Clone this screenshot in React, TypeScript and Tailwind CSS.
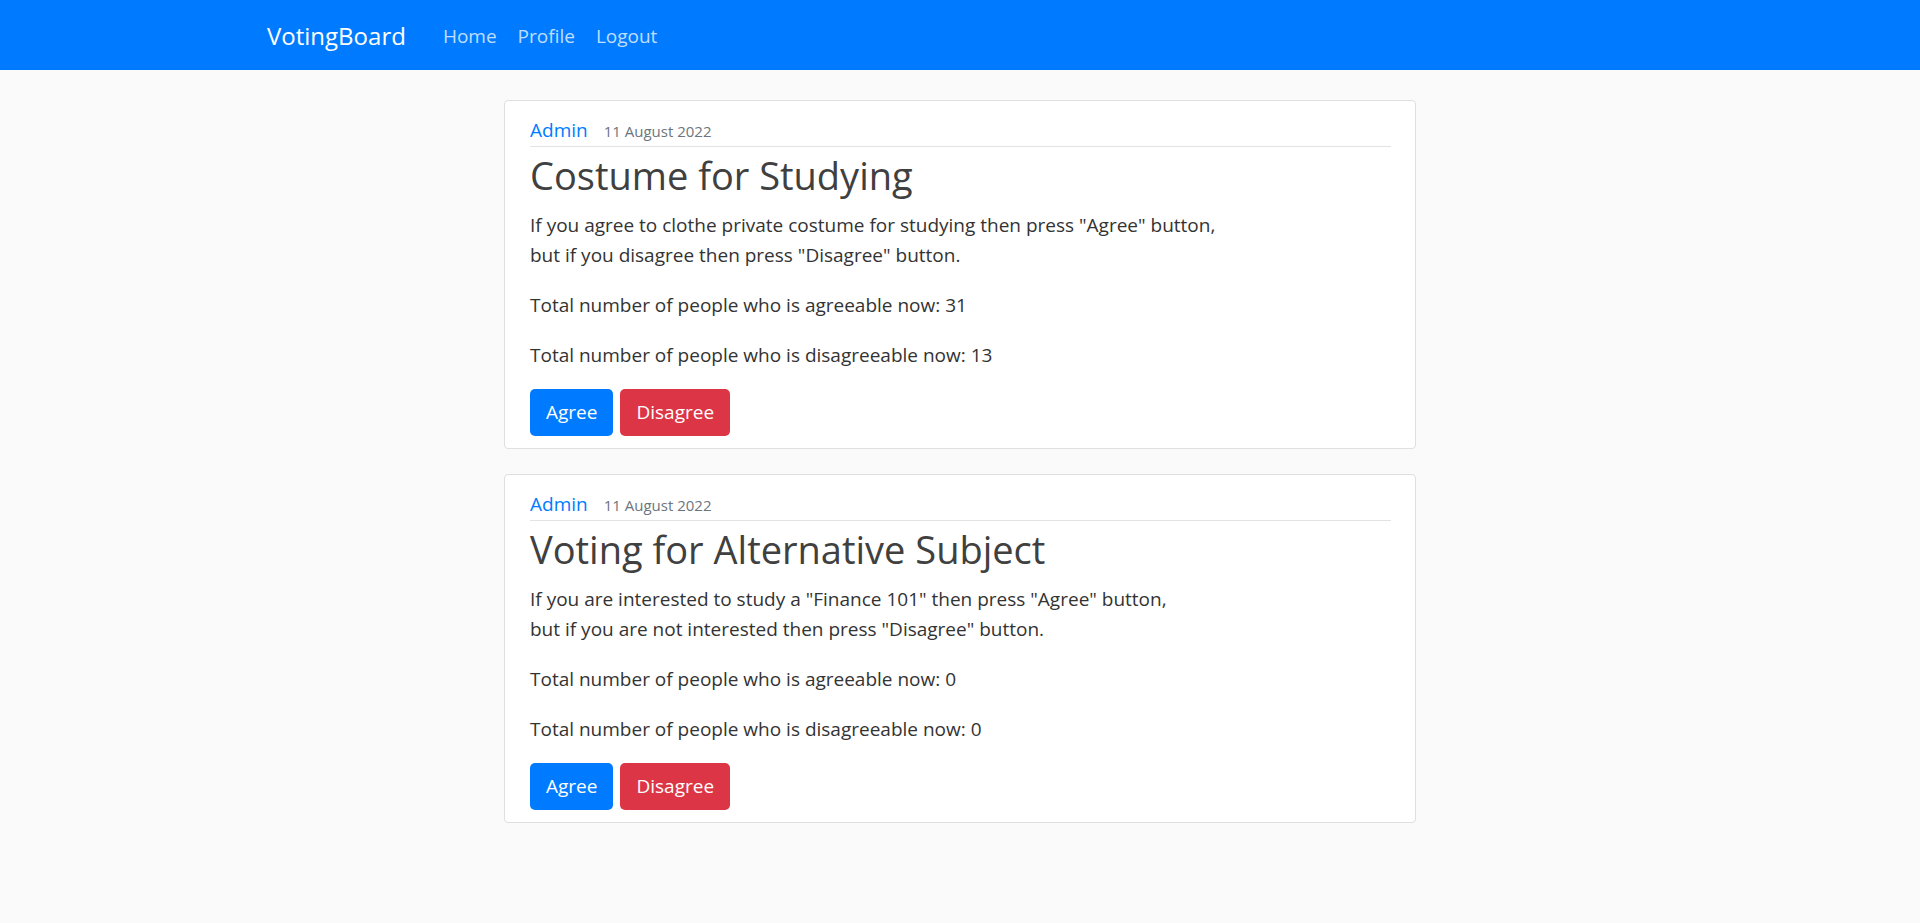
import React from 'react';

interface Poll {
  id: number;
  author: string;
  date: string;
  title: string;
  lines: string[];
  agree: number;
  disagree: number;
}

const polls: Poll[] = [
  {
    id: 1,
    author: 'Admin',
    date: '11 August 2022',
    title: 'Costume for Studying',
    lines: [
      'If you agree to clothe private costume for studying then press "Agree" button,',
      'but if you disagree then press "Disagree" button.',
    ],
    agree: 31,
    disagree: 13,
  },
  {
    id: 2,
    author: 'Admin',
    date: '11 August 2022',
    title: 'Voting for Alternative Subject',
    lines: [
      'If you are interested to study a "Finance 101" then press "Agree" button,',
      'but if you are not interested then press "Disagree" button.',
    ],
    agree: 0,
    disagree: 0,
  },
];

function Navbar() {
  return (
    <nav className="flex h-[70px] items-center bg-[#007bff] pl-[267px] pt-[2px]">
      <a href="#" className="mr-[37px] text-[24px] leading-[36px] text-white">
        VotingBoard
      </a>
      <ul className="flex items-center gap-[21px] text-[19px] leading-[28px] text-white/75">
        <li>
          <a href="#">Home</a>
        </li>
        <li>
          <a href="#">Profile</a>
        </li>
        <li>
          <a href="#">Logout</a>
        </li>
      </ul>
    </nav>
  );
}

function PollCard({ poll }: { poll: Poll }) {
  return (
    <div className="mb-[25px] rounded-[4px] border border-[#dfdfdf] bg-white pb-[12px] pl-[25px] pr-[24px] pt-[16px]">
      <div className="flex items-baseline gap-4 border-b border-[#e3e3e3] pb-[2px] leading-[26px]">
        <a href="#" className="text-[19px] text-[#007bff]">
          {poll.author}
        </a>
        <span className="text-[15px] text-[#6c757d]">{poll.date}</span>
      </div>
      <h1 className="mb-[12px] mt-[5px] text-[38px] leading-[46px] text-[#404040]">
        {poll.title}
      </h1>
      <div className="text-[19px] leading-[30px] text-[#333]">
        <p className="mb-[20px]">
          {poll.lines[0]}
          <br />
          {poll.lines[1]}
        </p>
        <p className="mb-[20px]">
          Total number of people who is agreeable now: {poll.agree}
        </p>
        <p className="mb-[19px]">
          Total number of people who is disagreeable now: {poll.disagree}
        </p>
      </div>
      <div className="flex gap-[7px]">
        <button className="flex h-[47px] items-center rounded-[5px] bg-[#007bff] px-[16px] text-[19px] text-white">
          Agree
        </button>
        <button className="flex h-[47px] items-center rounded-[5px] bg-[#dc3545] px-[16px] text-[19px] text-white">
          Disagree
        </button>
      </div>
    </div>
  );
}

export default function App() {
  return (
    <div className="min-h-screen bg-[#fafafa] font-['Open_Sans','Noto_Sans',sans-serif]">
      <Navbar />
      <main className="mx-auto mt-[30px] w-[912px]">
        {polls.map((poll) => (
          <PollCard key={poll.id} poll={poll} />
        ))}
      </main>
    </div>
  );
}
